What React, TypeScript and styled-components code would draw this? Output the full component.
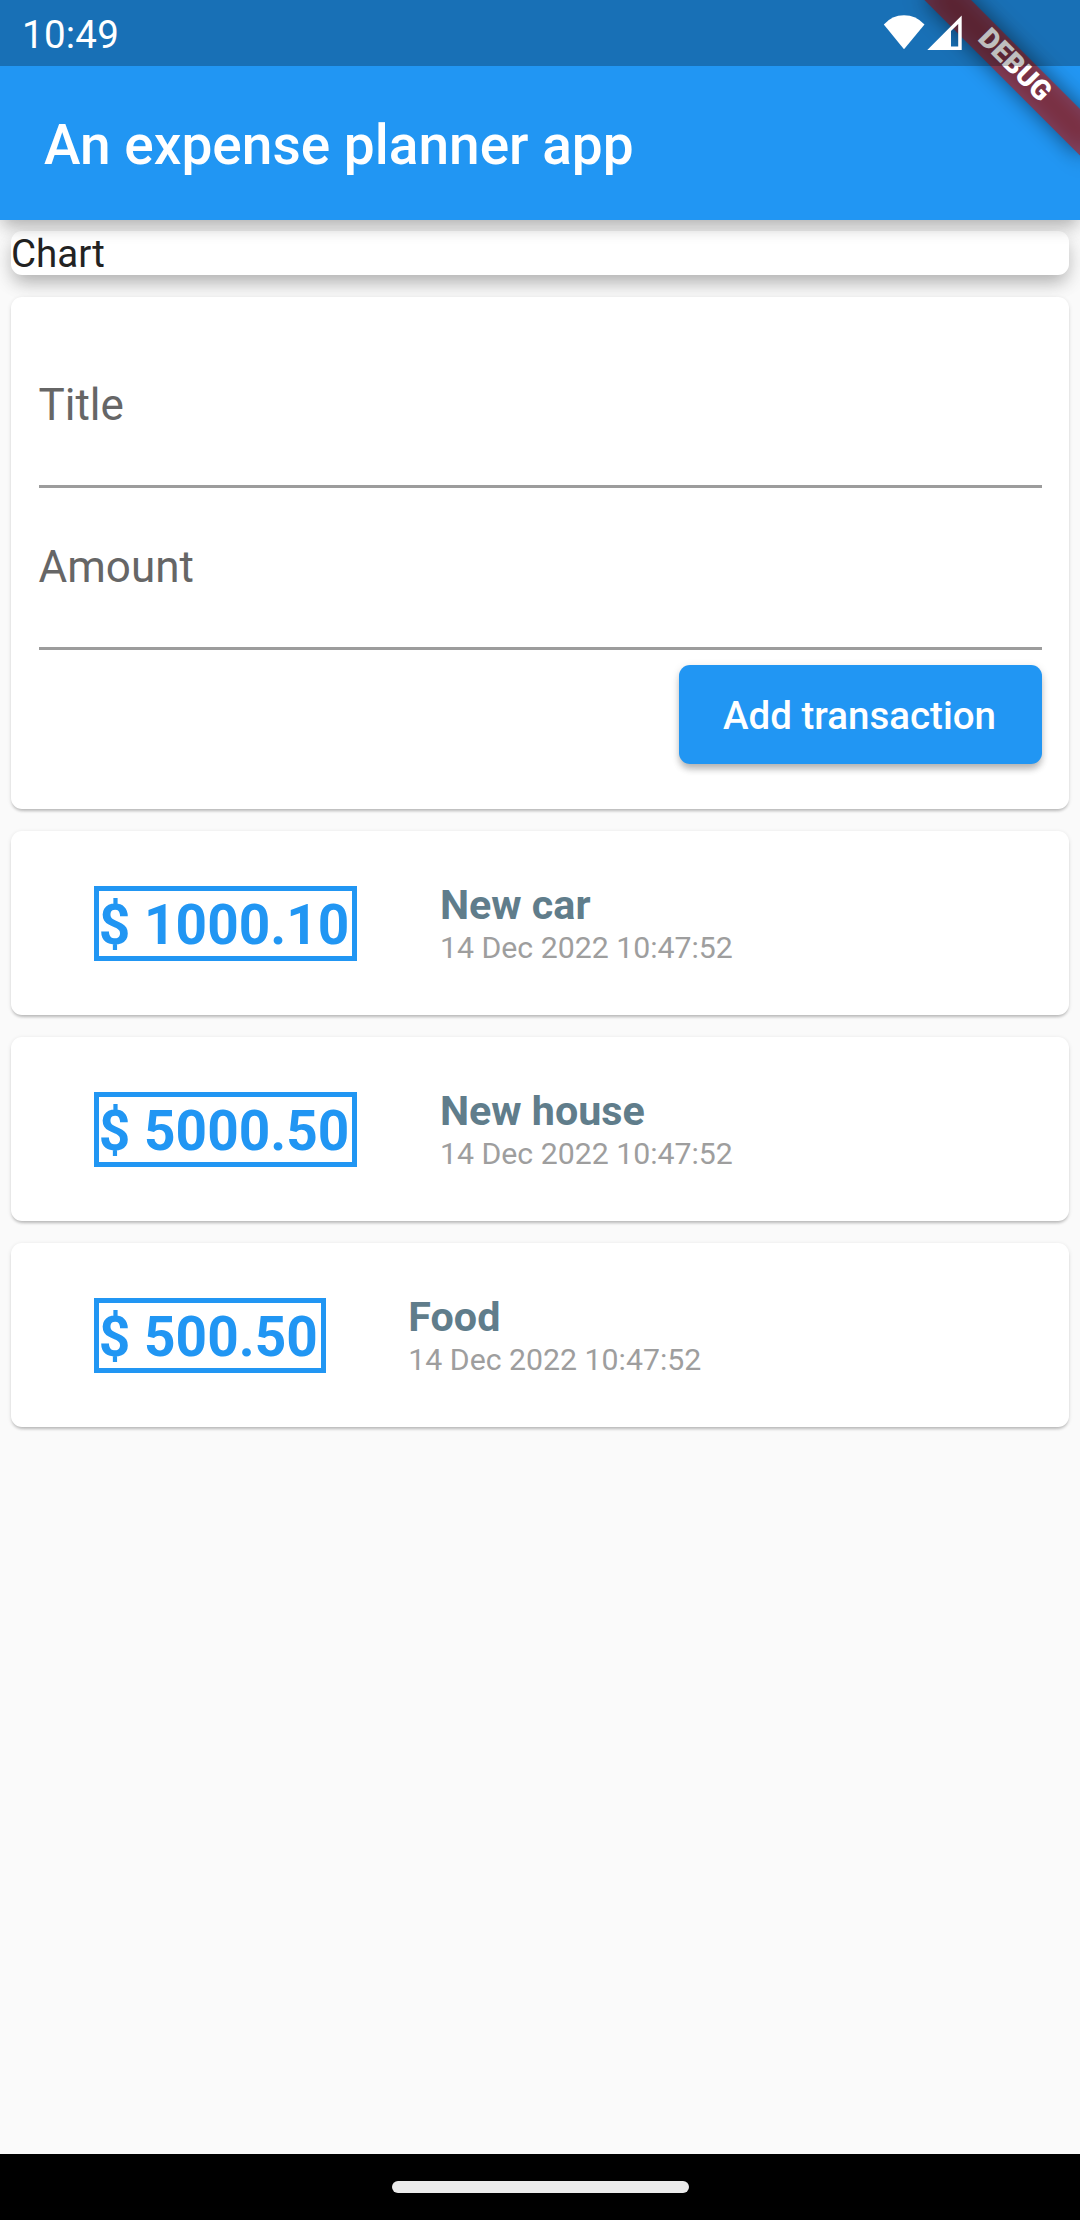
import React from "react";
import styled, { createGlobalStyle } from "styled-components";

const GlobalStyle = createGlobalStyle`
  *, *::before, *::after { box-sizing: border-box; }
  body { margin: 0; background: #fafafa; }
`;

const Screen = styled.div`
  position: relative;
  display: flex;
  flex-direction: column;
  width: 1080px;
  height: 2220px;
  overflow: hidden;
  background: #fafafa;
  font-family: Roboto, sans-serif;
  font-size: 38.5px;
  color: #222;
`;

const Header = styled.header`
  position: relative;
  z-index: 1;
  flex: none;
  background: #2196f3;
  box-shadow:
    0 9px 15px -3px rgba(0, 0, 0, 0.22),
    0 4px 22px 0 rgba(0, 0, 0, 0.1);
`;

const StatusBar = styled.div`
  position: relative;
  z-index: 2;
  display: flex;
  align-items: center;
  justify-content: space-between;
  height: 66px;
  padding: 0 118px 0 22px;
  background: rgba(0, 0, 0, 0.25);
  color: #fff;
`;

const Clock = styled.span`
  font-size: 38.5px;
  line-height: 66px;
  padding-top: 4px;
  letter-spacing: 0.25px;
`;

const StatusIcons = styled.div`
  display: flex;
  gap: 2.5px;
`;

const AppBar = styled.div`
  display: flex;
  align-items: center;
  height: 154px;
  padding: 4px 44px 0;
`;

const AppTitle = styled.h1`
  margin: 0;
  color: #fff;
  font-size: 55px;
  font-weight: 500;
  line-height: 64px;
`;

const BannerClip = styled.div`
  position: absolute;
  z-index: 1;
  top: 0;
  right: 0;
  width: 260px;
  height: 260px;
  overflow: hidden;
`;

const Ribbon = styled.div`
  position: absolute;
  top: 77px;
  left: 150px;
  width: 220px;
  height: 33px;
  transform: rotate(45deg);
  transform-origin: 110px -77px;

  &::before {
    content: "";
    position: absolute;
    inset: 0;
    background: rgba(0, 0, 0, 0.5);
    filter: blur(10.9px);
  }
`;

const RibbonLabel = styled.span`
  position: absolute;
  inset: 0;
  background: rgba(183, 28, 28, 0.627);
  color: #fff;
  font-size: 28.05px;
  font-weight: 900;
  line-height: 29.6px;
  text-align: center;
`;

const Content = styled.main`
  display: flex;
  flex: 1;
  flex-direction: column;
  gap: 22px;
  padding: 11px;
`;

const Card = styled.section<{ $raised?: boolean }>`
  flex: none;
  border-radius: 11px;
  background: #fff;
  box-shadow: ${(p) =>
    p.$raised
      ? "0 10px 17px -3px rgba(0,0,0,.24), 0 5px 24px 0 rgba(0,0,0,.1)"
      : "0 3px 3px -1px rgba(0,0,0,.2), 0 1px 4px 0 rgba(0,0,0,.11)"};
`;

const ChartCard = styled(Card)`
  height: 44px;
  line-height: 45px;
`;

const FormCard = styled(Card)`
  display: flex;
  flex-direction: column;
  height: 511.5px;
  padding: 27.5px;
`;

const Field = styled.label`
  display: flex;
  align-items: center;
  height: 162.25px;
  padding-bottom: 1.5px;
  border-bottom: 3px solid #9c9c9c;
  color: #666;
  font-size: 44px;
  line-height: 52px;

  &:first-child {
    height: 163.5px;
    padding-bottom: 0;
  }
`;

const AddButton = styled.button`
  align-self: flex-end;
  width: 363px;
  height: 99px;
  margin-top: 15px;
  padding: 2px 1px 0 0;
  border: 0;
  border-radius: 11px;
  background: #2196f3;
  box-shadow:
    0 6px 7px -1px rgba(0, 0, 0, 0.22),
    0 2.75px 9px 0 rgba(0, 0, 0, 0.13);
  color: #fff;
  font: 500 38.5px/44px Roboto, sans-serif;
`;

const TransactionCard = styled(Card)`
  display: flex;
  align-items: center;
  gap: 82.5px;
  height: 184px;
  padding: 0 82.5px;
`;

const Amount = styled.div`
  flex: none;
  height: 75px;
  margin-top: 1px;
  padding: 2.2px 3.1px 0 0.3px;
  border: 5.5px solid #2196f3;
  color: #2196f3;
  font-size: 55px;
  font-weight: 700;
  line-height: 64px;
  white-space: nowrap;
`;

const Details = styled.div`
  display: flex;
  flex-direction: column;
  padding-top: 2px;
`;

const Name = styled.div`
  color: #607d8b;
  font-size: 41.25px;
  font-weight: 700;
  line-height: 48px;
`;

const DateText = styled.div`
  color: #9e9e9e;
  font-size: 30.25px;
  line-height: 37px;
`;

const NavBar = styled.nav`
  display: flex;
  flex: none;
  justify-content: center;
  height: 66px;
  padding-top: 27px;
  background: #000;
`;

const HomeHandle = styled.div`
  width: 297px;
  height: 12px;
  border-radius: 6px;
  background: #ebebeb;
`;

const WifiIcon = () => (
  <svg width="42" height="36" viewBox="0 0 42 36">
    <path d="M0.8 9.5Q9 0.3 21 0.3Q33 0.3 41.5 9.5L21 34.3Z" fill="#fff" />
  </svg>
);

const SignalIcon = () => (
  <svg width="35" height="36" viewBox="0 0 35 36">
    <path d="M0.3 35L34.7 0.5V35ZM24 31.5H31.2V9L24 16Z" fill="#fff" fillRule="evenodd" />
  </svg>
);

const transactions = [
  { amount: "$ 1000.10", name: "New car", date: "14 Dec 2022 10:47:52" },
  { amount: "$ 5000.50", name: "New house", date: "14 Dec 2022 10:47:52" },
  { amount: "$ 500.50", name: "Food", date: "14 Dec 2022 10:47:52" },
];

export default function App() {
  return (
    <Screen>
      <GlobalStyle />
      <Header>
        <BannerClip>
          <Ribbon>
            <RibbonLabel>DEBUG</RibbonLabel>
          </Ribbon>
        </BannerClip>
        <StatusBar>
          <Clock>10:49</Clock>
          <StatusIcons>
            <WifiIcon />
            <SignalIcon />
          </StatusIcons>
        </StatusBar>
        <AppBar>
          <AppTitle>An expense planner app</AppTitle>
        </AppBar>
      </Header>
      <Content>
        <ChartCard $raised>Chart</ChartCard>
        <FormCard>
          <Field>Title</Field>
          <Field>Amount</Field>
          <AddButton>Add transaction</AddButton>
        </FormCard>
        {transactions.map((t) => (
          <TransactionCard key={t.name}>
            <Amount>{t.amount}</Amount>
            <Details>
              <Name>{t.name}</Name>
              <DateText>{t.date}</DateText>
            </Details>
          </TransactionCard>
        ))}
      </Content>
      <NavBar>
        <HomeHandle />
      </NavBar>
    </Screen>
  );
}
